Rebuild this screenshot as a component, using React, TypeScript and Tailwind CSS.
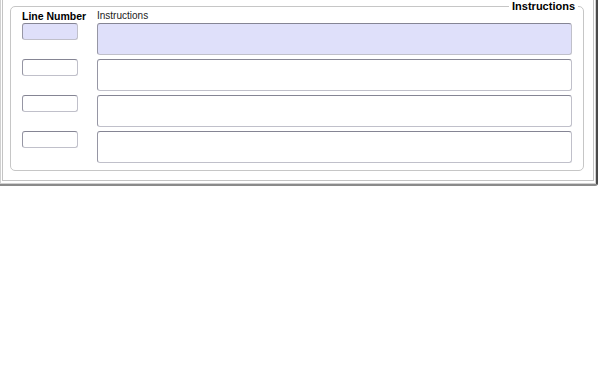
const rows = [0, 1, 2, 3];

function Field({ active, className }: { active: boolean; className: string }) {
  return (
    <div
      className={`${className} rounded-[3px] border border-t-[#858594] border-l-[#9696a4] border-r-[#c0c0ca] border-b-[#c0c0ca] ${
        active ? 'bg-[#dfe0fa]' : 'bg-white'
      }`}
    />
  );
}

export default function App() {
  return (
    <div className="w-[600px] h-[377px] bg-white font-['Liberation_Sans',Arial,sans-serif] text-black">
      <div className="w-[598px] h-[186px] border-r-2 border-b-2 border-r-[#4a4a4a] border-b-[#8a8a8a] rounded-br-[3px]">
        <div className="h-full border-l border-r border-b border-[#d0d0d0] pl-[1px] pr-[1px] pb-[2px]">
          <div className="h-full border-l border-r border-b border-[#c4c4c4] pt-[6px] pl-[7px] pr-[9px]">
            <div className="relative h-[165px] border border-[#c6c6c6] rounded-[5px] pl-[11px] pr-[11px]">
              <div className="absolute right-[5px] -top-[7px] bg-white px-[3px] text-[11px] leading-[13px] font-bold">
                Instructions
              </div>
              <div className="flex items-end h-[16px] pb-[1px]">
                <div className="w-[75px] text-[10.5px] leading-[12px] font-bold">Line Number</div>
                <div className="text-[10px] leading-[12px] text-[#222]">Instructions</div>
              </div>
              <div className="flex flex-col gap-[4px]">
                {rows.map((r) => (
                  <div key={r} className="flex items-start gap-[19px]">
                    <Field active={r === 0} className="w-[56px] h-[17px]" />
                    <Field active={r === 0} className="flex-1 h-[32px]" />
                  </div>
                ))}
              </div>
            </div>
          </div>
        </div>
      </div>
    </div>
  );
}
